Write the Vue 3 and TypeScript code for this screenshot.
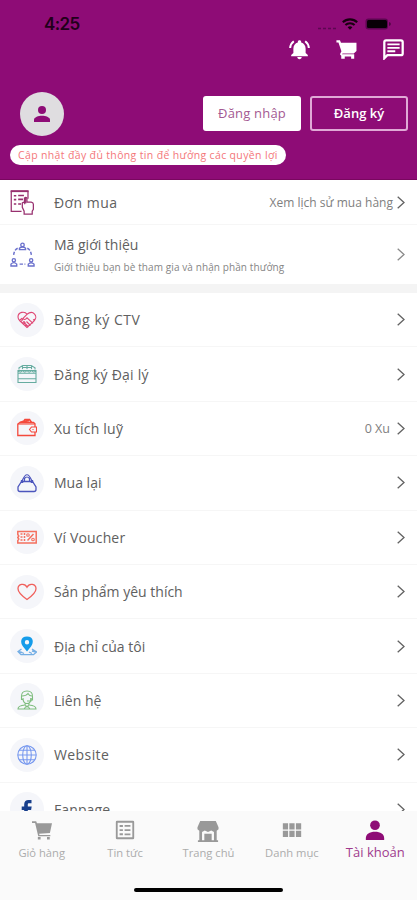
<script setup lang="ts">
interface MenuItem {
  id: string
  label: string
  color: string
  spacing: string
  value?: string
}

interface Tab {
  id: string
  label: string
  active?: boolean
}

const menu: MenuItem[] = [
  { id: 'partner', label: 'Đăng ký CTV', color: '#df4673', spacing: '.53px' },
  { id: 'agency', label: 'Đăng ký Đại lý', color: '#66aca0', spacing: '.24px' },
  { id: 'wallet', label: 'Xu tích luỹ', color: '#f4493c', spacing: '.2px', value: '0 Xu' },
  { id: 'bag', label: 'Mua lại', color: '#4b55bd', spacing: '0px' },
  { id: 'voucher', label: 'Ví Voucher', color: '#f4705f', spacing: '.15px' },
  { id: 'heart', label: 'Sản phẩm yêu thích', color: '#f0605c', spacing: '0px' },
  { id: 'pin', label: 'Địa chỉ của tôi', color: '#159cea', spacing: '0px' },
  { id: 'support', label: 'Liên hệ', color: '#7fbd7e', spacing: '0px' },
  { id: 'globe', label: 'Website', color: '#7899ef', spacing: '.4px' },
  { id: 'facebook', label: 'Fanpage', color: '#173e8c', spacing: '.1px' },
]

const tabs: Tab[] = [
  { id: 'cart', label: 'Giỏ hàng' },
  { id: 'news', label: 'Tin tức' },
  { id: 'home', label: 'Trang chủ' },
  { id: 'grid', label: 'Danh mục' },
  { id: 'user', label: 'Tài khoản', active: true },
]
</script>

<template>
  <div class="screen">
    <header class="header">
      <div class="status">
        <span class="clock">4:25</span>
        <div class="signals">
          <svg class="dots" viewBox="0 0 20 3"><path d="M1 1.5h3M6 1.5h3M11 1.5h3M16 1.5h3" stroke="#5d0752" stroke-width="1.3" /></svg>
          <svg class="wifi" viewBox="0 0 16 12" fill="none" stroke="#17000f" stroke-width="2.1">
            <path d="M.8 4.3a10.3 10.3 0 0 1 14.4 0M3.4 7.1a6.6 6.6 0 0 1 9.2 0" />
            <path d="M8 11.8 5.6 9.3a3.5 3.5 0 0 1 4.8 0z" fill="#17000f" stroke="none" />
          </svg>
          <svg class="battery" viewBox="0 0 26 12"><rect x=".5" y=".5" width="22.5" height="11" rx="3" fill="#5a064f" /><rect x="2" y="2" width="20" height="8" rx="1.5" fill="#080006" /><path d="M24.2 4v4q1.5-.5 1.5-2t-1.5-2" fill="#3e0536" /></svg>
        </div>
      </div>
      <div class="actions">
        <svg viewBox="0 0 24 24" fill="#fff"><path d="M12 1.500c-1.100 0-1.900.8-1.900 1.700v.7C7 4.700 5 7.500 5 11v5l-2.500 2.200v1.600h19v-1.600L19 16v-5c0-3.500-2-6.300-5.100-7.100v-.7c0-.9-.8-1.700-1.900-1.700zM9.500 20.700h5c0 1.500-1.100 2.500-2.500 2.500s-2.500-1-2.500-2.500z" /><path d="M5.500 2.500C3 4.400 1.500 7 1.300 10.300M18.500 2.500c2.500 1.900 4 4.500 4.200 7.800" fill="none" stroke="#fff" stroke-width="2.300" /></svg>
        <svg viewBox="0 0 24 24" fill="#fff"><path d="M.5 1.500h4l1.200 2.700h17.700v9.500L20.300 16.500H7.600l-.8 1h14V22.500h-3.500v-2.500H10v2.500H6V19l-1.500-1.500L6.200 14 2.800 4H.5z" /></svg>
        <svg viewBox="0 0 24 24" fill="none" stroke="#fff"><path d="M1.500 22V3.500q0-2 2-2h17q2 0 2 2v13q0 2-2 2H5z" stroke-width="2.600" /><path d="M5 6.200h14M5 10.100h14M5 14h9" stroke-width="2.100" /></svg>
      </div>
      <div class="account">
        <div class="avatar"><svg viewBox="0 0 16 16" fill="#8e0c76"><circle cx="8" cy="4" r="4" /><path d="M0 16v-2.200c0-2.500 4.500-4 8-4s8 1.500 8 4V16z" /></svg></div>
        <div class="buttons">
          <button class="btn login">Đăng nhập</button>
          <button class="btn register">Đăng ký</button>
        </div>
      </div>
      <div class="notice"><span>Cập nhật đầy đủ thông tin để hưởng các quyền lợi</span></div>
    </header>

    <main class="content">
      <section class="row orders">
        <svg class="lead" viewBox="0 0 26 26" fill="none" stroke="#98306f" stroke-width="1.300">
          <path d="M12 22.300H1.300V1.300h17.400V9" /><path d="M.7 1.200h18.600" stroke-width="2" />
          <path d="M4 6h2.500m2-.3h6M4 10h2.500m2-.2h5M4 14.500h2.500m2 0h3" stroke-width="1.700" />
          <path d="M12.800 18v-4.500q1.200-1.500 2.200 0v-5q1.300-1.600 2.600 0v4h4.500q2.200.3 2.200 2.300v5.400l-1.200 1.800v3.200h-8.400V22z" fill="#fff" />
          <path d="M16.300 8v6" />
        </svg>
        <span class="label order-label">Đơn mua</span>
        <span class="value history">Xem lịch sử mua hàng</span>
        <svg class="chevron" viewBox="0 0 8 13"><path d="m.7.700 6.300 5.800-6.300 5.800" /></svg>
      </section>
      <section class="row referral">
        <svg class="lead" viewBox="0 0 26 26" fill="none" stroke="#6a70cc" stroke-width="1.400">
          <circle cx="13" cy="3" r="1.800" /><path d="M9.800 8V6.500Q13 3.800 16.200 6.500V8z" /><circle cx="4" cy="19" r="1.700" /><path d="M1 25v-2q3-3 6 0v2z" /><circle cx="22" cy="19" r="1.700" /><path d="M19 25v-2q3-3 6 0v2z" />
          <path d="M8 6.500Q3.800 8.500 3.700 15M18 6.500q4.200 2 4.300 8.500M10 23h6" stroke-dasharray="3.500 1.500" stroke-width="1.500" />
        </svg>
        <div class="stack"><span class="label referral-label">Mã giới thiệu</span><span class="hint">Giới thiệu bạn bè tham gia và nhận phần thưởng</span></div>
        <svg class="chevron pale" viewBox="0 0 8 13"><path d="m.7.700 6.300 5.800-6.300 5.800" /></svg>
      </section>
      <div class="divider"></div>

      <section v-for="item in menu" :key="item.id" class="row item">
        <div class="badge" :style="{ color: item.color }">
          <svg viewBox="0 0 20 20" fill="none" stroke="currentColor" stroke-width="1.100">
            <template v-if="item.id === 'partner'"><path d="M10 4.300C7.800.8 1 1.800 1 7c0 1.300.7 2.700 1.800 3.800L10 17.500l7.200-6.700C21.500 6.500 16.300-.8 10 4.300L6 8.300q1.500 2.500 4-.5l6 5.500M13.500 15.500l-4-4M11.500 17l-4-4M2.500 10.500l2.200-2 1 1-2 2.500M5 13.500l2-2 1 1-2 2.200M8 16l1.500-1.500M18.500 9l-2.500 1" /></template>
            <template v-else-if="item.id === 'agency'"><path d="M2 5.500V3.800l3.800-2.300h8.400L18 3.800v1.700M1 6.500h18v12H1zM1 9.300h18M1 14.700h18M5.500 2v3M10 1.500V5M14.500 2v3M1 6.500q2.300 3 4.500 0 2.200 3 4.500 0 2.200 3 4.500 0 2.200 3 4.500 0M5.500 3.500h9" /></template>
            <template v-else-if="item.id === 'wallet'"><path d="M18 9V5.800L16.500 4.500H3L.8 6v11.500H18V14" stroke-width="1.300" /><path d="m3 4.500 4-1.500 1-1.500h4.500l2 3M5 4l7-1.300" stroke-width="1.700" /><path d="M19.500 9h-5l-2 2.500 2 2.500h5zM15.500 11.500h1" /><path d="M1 6h17" /></template>
            <template v-else-if="item.id === 'bag'"><path d="M4.500 8.500 1 14v2.500q0 2 2 2h14q2 0 2-2V14l-3.500-5.500z" stroke-width="1.300" /><path d="M5.500 10V7Q10-3.500 14.500 7v3M7.500 8V5.500q2.500-3 5 0V8M5 8.500h2.500M12.500 8.500H15" stroke-width="1.200" /><path d="M5 7v3M15 7v3" stroke-width="2.300" /></template>
            <template v-else-if="item.id === 'voucher'"><path d="M.8 4.500h18.400v11.500H.8v-2.500l1-1.500-1-1.500 1-1.500-1-1.500z" stroke-width="1.500" /><path d="M3.500 7h2M3.500 10h2M3.500 13h2M7.500 6v2M7.500 9v2M7.500 12v2M10.500 13.500l6-6.500" stroke-width="1.500" /><circle cx="11" cy="8" r="1.300" /><circle cx="16" cy="12.500" r="1.300" /></template>
            <path v-else-if="item.id === 'heart'" d="M10 17.500C5 14 1 10.500 1 6.800 1 2 7.500.5 10 5.200 12.500.5 19 2 19 6.800c0 3.700-4 7.200-9 10.700z" stroke-width="1.300" />
            <template v-else-if="item.id === 'pin'"><path d="M10 .5C3 .5 3.200 7 6 10.500l4 5 4-5C16.800 7 17 .5 10 .5zm0 3.500a2.200 2.200 0 1 1 0 4.400A2.200 2.200 0 0 1 10 4z" fill="currentColor" fill-rule="evenodd" stroke="none" /><path d="M4.500 13 1 15.500l3 3.200h12.500l3-2.700L15 13M5 16.500l2 1M12 16l3 1.500M1 15.500l4 1M15 15l4 1" stroke="#74aee4" stroke-width="1.300" /></template>
            <template v-else-if="item.id === 'support'"><path d="M4.500 7Q4 1 10 1t5.500 6v3h-2M4.500 5.500v4h2M6 8c0 5 2.500 5.500 4 5.500s4-.5 4-5.500M5 6c3 0 4.500-.5 6-2.500 1 2 2.300 2.500 4 2.500M8 13v2q-7 .5-7 4h18q0-3.500-7-4v-2M8 14.500l2 2.500 2-2.500M7 19l2-2.500M13 19l-2-2.500" /><path d="M10 11h4V8" /></template>
            <template v-else-if="item.id === 'globe'"><circle cx="10" cy="10" r="9.200" /><ellipse cx="10" cy="10" rx="4.300" ry="9.200" /><path d="M10 .8v18.400M.8 10h18.400M2.300 5.200h15.400M2.300 14.800h15.400" /></template>
            <path v-else d="M14.500 1v3.300H12c-.8 0-1.200.5-1.200 1.200v2h3.900l-.6 3.500h-3.300v8.500H7.200V11H4.700V7.500h2.500V5.200C7.200 2.500 9 1 11.500 1z" fill="currentColor" stroke="none" />
          </svg>
        </div>
        <span class="label" :style="{ letterSpacing: item.spacing }">{{ item.label }}</span>
        <span v-if="item.value" class="value">{{ item.value }}</span>
        <svg class="chevron" viewBox="0 0 8 13"><path d="m.7.700 6.300 5.800-6.300 5.800" /></svg>
      </section>
    </main>

    <nav class="tabbar">
      <div class="tabs">
        <div v-for="tab in tabs" :key="tab.id" class="tab" :class="[tab.id, { active: tab.active }]">
          <svg viewBox="0 0 24 24" fill="currentColor">
            <path v-if="tab.id === 'cart'" d="M0 1.500h5l1 2.500h18l-2.500 11.500-13 1 .5 1.500h13V19.500H7.500L3.700 3.500H0zM7 20.500h3.300v3H7zm11 0h3.300v3H18z" />
            <template v-else-if="tab.id === 'news'"><path d="M2.500 1h19q1.500 0 1.500 1.500v19q0 1.500-1.500 1.500h-19Q1 23 1 21.500v-19Q1 1 2.500 1zm.7 2.200v17.600h17.600V3.200z" fill-rule="evenodd" /><path d="M5.500 6h4v2.300h-4zM11.500 6h7v2h-7zM5.500 11h4v2.300h-4zM11.500 11.200h7v2h-7zM5.500 16h4v2.300h-4zM11.500 16.200h7v2h-7z" /></template>
            <path v-else-if="tab.id === 'home'" d="M3.500 1h17L23.500 8v2l-2 1.700V22H23v2H1v-2h1.500V11.700L.5 10V8zM5.500 13v9H8v-7h8v7h2.500v-9l-3-1.500-3.500 1.500-3.500-1.500z" fill-rule="evenodd" />
            <path v-else-if="tab.id === 'grid'" d="M1 4h6.300v7.300H1zM8.800 4h6.300v7.300H8.800zM16.700 4H23v7.300h-6.300zM1 13h6.300v7.300H1zM8.800 13h6.300v7.300H8.800zM16.700 13H23v7.300h-6.300z" />
            <template v-else><circle cx="12" cy="6.300" r="5.800" /><path d="M1 24v-2.500C1 17 5.500 14 12 14s11 3 11 7.500V24z" /></template>
          </svg>
          <span>{{ tab.label }}</span>
        </div>
      </div>
      <div class="home-bar"></div>
    </nav>
  </div>
</template>

<style>
body { background: #fff; }
</style>

<style scoped>
* { box-sizing: border-box; }
.screen { width: 417px; height: 900px; display: flex; flex-direction: column; overflow: hidden; background: #fff; color: #606060; font-family: "Open Sans", "Noto Sans", sans-serif; white-space: nowrap; }
svg { display: block; flex: none; }
.header { height: 180px; flex: none; background: #8e0c76; border-bottom: 1px solid #79075f; }
.status { height: 37px; padding: 14px 26px 0 44px; display: flex; justify-content: space-between; }
.clock { font: 600 17px/21px Inter, sans-serif; color: #21001a; letter-spacing: -.6px; }
.signals { display: flex; align-items: center; height: 20px; }
.dots { width: 20px; height: 3px; margin: 8px 5px 0 0; }
.wifi { width: 16px; height: 12px; margin-right: 7px; }
.battery { width: 26px; height: 12px; }
.actions { display: flex; justify-content: flex-end; gap: 26px; padding: 2px 13px 0 0; }
.actions svg { width: 21px; height: 21px; }
.account { display: flex; justify-content: space-between; padding: 32px 9px 0 20px; }
.avatar { width: 44px; height: 44px; border-radius: 50%; background: #dfdde0; display: flex; align-items: center; justify-content: center; }
.avatar svg { width: 16px; height: 16px; }
.buttons { display: flex; gap: 9px; padding-top: 4px; }
.btn { width: 98px; height: 35px; border-radius: 3px; font: 400 13px/18px "Open Sans", sans-serif; padding: 0 0 1px; white-space: nowrap; }
.login { background: #fff; color: #a45992; border: 0; letter-spacing: .2px; }
.register { background: transparent; color: #fff; border: 2px solid #e0a9d6; font-weight: 600; }
.notice { width: 276px; height: 20px; margin: 9px 0 0 10px; background: #fff; border-radius: 10px; color: #f4767a; font-size: 10.500px; line-height: 20px; letter-spacing: .35px; padding-left: 8px; }
.content { flex: 1; min-height: 0; overflow: hidden; }
.row { display: flex; align-items: center; padding: 0 12px 0 10px; border-bottom: 1px solid #f6f6f6; }
.orders { height: 45px; }
.referral { height: 59px; border-bottom: 0; }
.item { height: 54.400px; }
.divider { height: 9px; background: #f4f4f4; }
.lead { width: 25px; height: 25px; margin-right: 19px; }
.label { font-size: 14px; line-height: 20px; margin-right: auto; padding-top: 1px; }
.order-label { letter-spacing: .45px; }
.stack { display: flex; flex-direction: column; margin-right: auto; gap: 3px; padding-top: 1px; }
.hint { font-size: 10px; line-height: 18px; letter-spacing: .1px; color: #858585; }
.value { font-size: 12.500px; color: #808080; margin-right: 7px; }
.history { font-size: 12px; margin-right: 4px; letter-spacing: .02px; }
.chevron { width: 8px; height: 13px; fill: none; stroke: #626262; stroke-width: 1.300; }
.pale { stroke: #8a8a8a; }
.badge { width: 34px; height: 34px; margin-right: 10px; border-radius: 50%; background: #f5f6fa; display: flex; align-items: center; justify-content: center; flex: none; }
.badge svg { width: 20px; height: 20px; }
.tabbar { height: 89px; flex: none; background: #fafafa; }
.tabs { display: grid; grid-template-columns: repeat(5, 1fr); height: 77px; }
.tab { display: flex; flex-direction: column; align-items: center; color: #999; font-size: 11.200px; line-height: 16px; padding-top: 9px; gap: 5px; }
.tab > span { color: #acacac; }
.tab svg { width: 20px; height: 20px; }
.home svg { width: 24px; height: 22px; margin-bottom: -2px; }
.active { color: #8e0c76; font-size: 13px; }
.active > span { color: #a03a8d; }
.active svg { margin-bottom: -1px; }
.home-bar { width: 149px; height: 4px; border-radius: 2px; background: #000; margin: 0 auto; }
</style>
